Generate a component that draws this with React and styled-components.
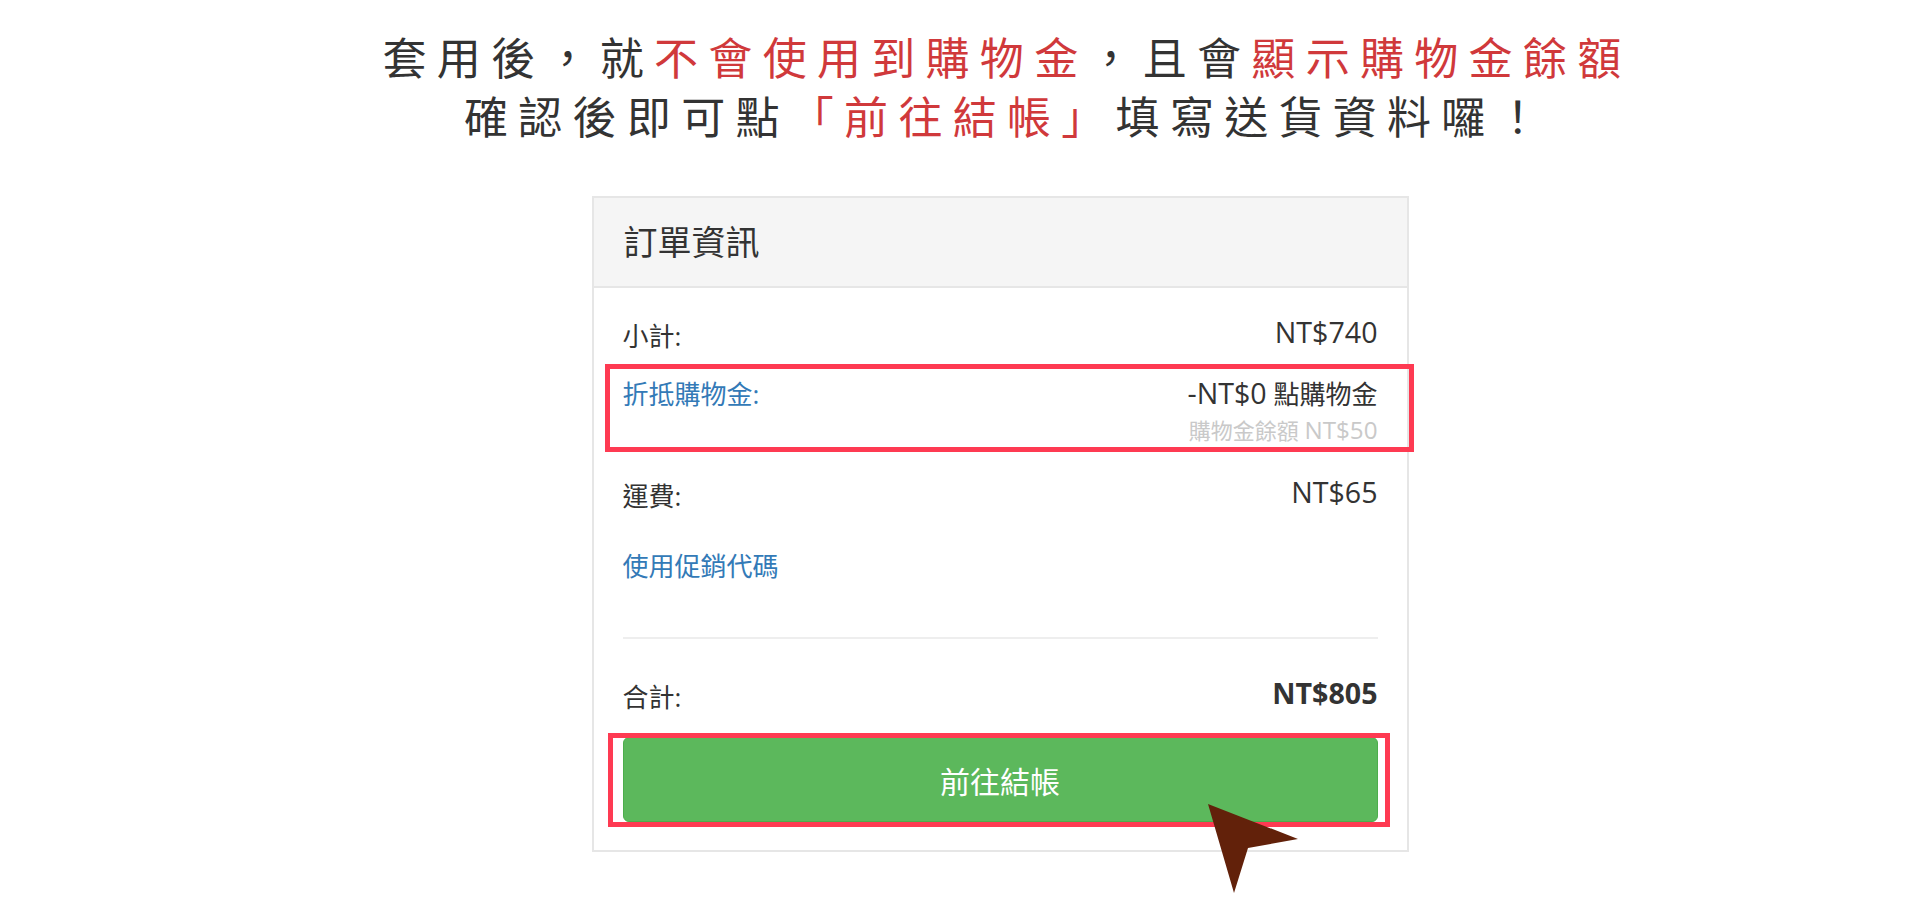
import React from 'react';
import styled, { createGlobalStyle } from 'styled-components';

const GlobalStyle = createGlobalStyle`
  html, body { margin: 0; padding: 0; background: #fff; }
  body { font-family: "Open Sans", "Noto Sans CJK TC", sans-serif; }
`;

const Page = styled.main`
  display: flex;
  flex-direction: column;
  align-items: center;
  padding: 27px 0 0 80px;
  min-height: 923px;
  box-sizing: border-box;
`;

const Title = styled.h1`
  margin: 0;
  padding-left: 14px;
  font-family: "Noto Sans CJK TC", sans-serif;
  font-weight: 400;
  font-size: 44px;
  line-height: 59px;
  letter-spacing: 10.3px;
  color: #333;
  text-align: center;
`;

const Hot = styled.span`
  color: #d0393b;
`;

const Panel = styled.section`
  margin-top: 51px;
  width: 817px;
  box-sizing: border-box;
  border: 2px solid #e6e6e6;
  background: #fff;
`;

const PanelHeading = styled.header`
  background: #f5f5f5;
  border-bottom: 2px solid #e6e6e6;
  padding: 20px 30px;
  font-size: 34px;
  line-height: 48px;
  color: #333;
`;

const PanelBody = styled.div`
  padding: 30px 29px 28px;
  display: flex;
  flex-direction: column;
`;

const Row = styled.div`
  position: relative;
  display: flex;
  justify-content: space-between;
  align-items: flex-start;
  font-size: 26px;
  line-height: 37px;
  color: #333;
  margin-top: ${p => p.$mt || 0}px;
`;

const Label = styled.span`
  color: ${p => (p.$link ? '#337ab7' : '#333')};
`;

const Value = styled.div`
  display: flex;
  flex-direction: column;
  align-items: flex-end;
  font-weight: ${p => (p.$bold ? 700 : 400)};
`;

const Amount = styled.span`
  font-size: 1.1em;
  line-height: 1;
`;

const SubNote = styled.span`
  font-size: 22px;
  line-height: 35px;
  color: #c9c9c9;
`;

const PromoLink = styled.a`
  font-size: 26px;
  line-height: 37px;
  color: #337ab7;
  text-decoration: none;
  margin-top: 33px;
  align-self: flex-start;
  cursor: pointer;
`;

const Divider = styled.hr`
  margin: 52px 0 0;
  border: 0;
  border-top: 2px solid #eee;
  height: 0;
`;

const ButtonWrap = styled.div`
  position: relative;
  margin-top: 21px;
`;

const CheckoutButton = styled.button`
  display: block;
  width: 100%;
  height: 85px;
  box-sizing: border-box;
  background: #5cb85c;
  border: 1px solid #4cae4c;
  border-radius: 6px;
  color: #fff;
  font-family: "Open Sans", "Noto Sans CJK TC", sans-serif;
  font-size: 30px;
  cursor: pointer;
`;

const Highlight = styled.div`
  position: absolute;
  top: ${p => p.$t}px;
  left: ${p => p.$l}px;
  right: ${p => p.$r}px;
  bottom: ${p => p.$b}px;
  border: 5px solid #fe3a52;
  pointer-events: none;
  z-index: 2;
`;

const Pointer = styled.svg`
  position: absolute;
  left: 585px;
  top: 67px;
  width: 91px;
  height: 90px;
  z-index: 3;
  overflow: visible;
`;

export default function App() {
  return (
    <>
      <GlobalStyle />
      <Page>
        <Title>
          套用後，就<Hot>不會使用到購物金</Hot>，且會<Hot>顯示購物金餘額</Hot>
          <br />
          確認後即可點<Hot>「前往結帳」</Hot>填寫送貨資料囉！
        </Title>
        <Panel>
          <PanelHeading>訂單資訊</PanelHeading>
          <PanelBody>
            <Row>
              <Label>小計:</Label>
              <Value><Amount>NT$740</Amount></Value>
            </Row>
            <Row $mt={21}>
              <Label $link>折抵購物金:</Label>
              <Value>
                <span><Amount>-NT$0</Amount> 點購物金</span>
                <SubNote>購物金餘額 <Amount>NT$50</Amount></SubNote>
              </Value>
              <Highlight $t={-12} $l={-18} $r={-36} $b={-4} />
            </Row>
            <Row $mt={30}>
              <Label>運費:</Label>
              <Value><Amount>NT$65</Amount></Value>
            </Row>
            <PromoLink>使用促銷代碼</PromoLink>
            <Divider />
            <Row $mt={40}>
              <Label>合計:</Label>
              <Value $bold><Amount>NT$805</Amount></Value>
            </Row>
            <ButtonWrap>
              <CheckoutButton>前往結帳</CheckoutButton>
              <Highlight $t={-4} $l={-15} $r={-12} $b={-5} />
              <Pointer viewBox="0 0 91 90">
                <polygon points="0,0 90,35 40,44 26,89" fill="#62210a" />
              </Pointer>
            </ButtonWrap>
          </PanelBody>
        </Panel>
      </Page>
    </>
  );
}
